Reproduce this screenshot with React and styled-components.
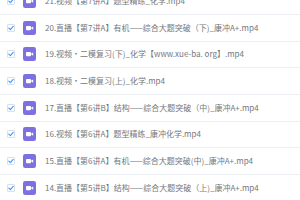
import React from "react";
import styled, { createGlobalStyle } from "styled-components";

const Global = createGlobalStyle`
  html, body { margin: 0; padding: 0; background: #ffffff; }
  body { width: 300px; height: 200px; overflow: hidden; }
`;

const Viewport = styled.div`
  width: 300px;
  height: 200px;
  overflow: hidden;
  background: #ffffff;
  font-family: "Noto Sans CJK SC", "Noto Sans", sans-serif;
`;

const List = styled.ul`
  list-style: none;
  margin: -11.67px 0 0 0;
  padding: 0;
  display: flex;
  flex-direction: column;
`;

const Row = styled.li`
  box-sizing: border-box;
  height: 26.667px;
  display: flex;
  align-items: center;
  padding-left: 7px;
  border-bottom: 1px solid #ebeef3;
`;

const Check = styled.span`
  box-sizing: border-box;
  width: 8px;
  height: 8px;
  border: 1px solid #dbe0e7;
  border-radius: 1px;
  background: #fff;
  display: flex;
  align-items: center;
  justify-content: center;
  margin-right: 8px;
  flex: none;
`;

const Icon = styled.svg`
  width: 13px;
  height: 14px;
  flex: none;
  margin-right: 9px;
`;

const Name = styled.span`
  font-size: 8px;
  line-height: 10px;
  color: #74777d;
  white-space: nowrap;
`;

const files = [
  "21.视频【第7讲A】题型精练_化学.mp4",
  "20.直播【第7讲A】有机——综合大题突破（下)_康冲A+.mp4",
  "19.视频·二模复习(下)_化学【www.xue-ba. org】.mp4",
  "18.视频·二模复习(上)_化学.mp4",
  "17.直播【第6讲B】结构——综合大题突破（中)_康冲A+.mp4",
  "16.视频【第6讲A】题型精练_康冲化学.mp4",
  "15.直播【第6讲A】有机——综合大题突破(中)_康冲A+.mp4",
  "14.直播【第5讲B】结构——综合大题突破（上)_康冲A+.mp4",
];

const CheckMark = () => (
  <svg width="6" height="6" viewBox="0 0 6 6">
    <polyline points="0.8,3.1 2.4,4.6 5.2,1.4" fill="none" stroke="#409eff" strokeWidth="1.2" strokeLinecap="round" strokeLinejoin="round" />
  </svg>
);

const VideoIcon = () => (
  <Icon viewBox="0 0 13 14">
    <rect x="0" y="0" width="13" height="14" rx="2.2" fill="#7d71e2" />
    <rect x="3" y="5" width="5" height="4.2" rx="0.9" fill="#ffffff" />
    <polygon points="7.6,7.1 10.2,5.4 10.2,8.8" fill="#ffffff" />
  </Icon>
);

export default function App() {
  return (
    <>
      <Global />
      <Viewport>
        <List>
          {files.map((f) => (
            <Row key={f}>
              <Check><CheckMark /></Check>
              <VideoIcon />
              <Name>{f}</Name>
            </Row>
          ))}
        </List>
      </Viewport>
    </>
  );
}
